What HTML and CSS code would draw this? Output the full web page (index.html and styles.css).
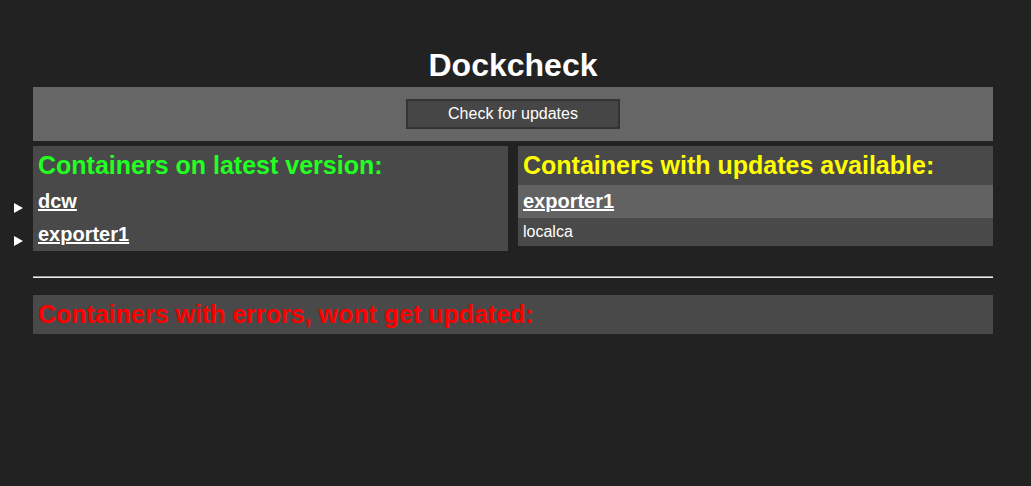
FILE: index.html
```html
<!DOCTYPE html>
<html>
<head>
<meta charset="utf-8">
<title>Dockcheck</title>
<link rel="stylesheet" href="styles.css">
</head>
<body>
<div class="wrap">
  <h1 class="title">Dockcheck</h1>
  <div class="toolbar">
    <button class="check-btn">Check for updates</button>
  </div>
  <div class="columns">
    <section class="panel">
      <h2 class="panel-title ok">Containers on latest version:</h2>
      <ul class="list">
        <li class="item marked"><a class="name" href="#">dcw</a></li>
        <li class="item marked"><a class="name" href="#">exporter1</a></li>
      </ul>
    </section>
    <section class="panel">
      <h2 class="panel-title upd">Containers with updates available:</h2>
      <ul class="list">
        <li class="item active"><a class="name" href="#">exporter1</a></li>
        <li class="item plain">localca</li>
      </ul>
    </section>
  </div>
  <hr class="divider">
  <section class="panel">
    <h2 class="panel-title err">Containers with errors, wont get updated:</h2>
  </section>
</div>
</body>
</html>
```

FILE: styles.css
```css
html, body {
  background: #222222;
}
body {
  margin: 0;
  padding: 0 0 0 33px;
  font-family: "Liberation Sans", Arial, sans-serif;
  color: #ffffff;
}
.wrap {
  width: 960px;
}
.title {
  margin: 47px 0 3px;
  font-size: 32px;
  line-height: 37px;
  font-weight: bold;
  text-align: center;
  color: #ffffff;
}
.toolbar {
  background: #666666;
  padding: 12px 0;
  display: flex;
  justify-content: center;
}
.check-btn {
  width: 214px;
  height: 30px;
  background: #464646;
  border: 2px solid #333333;
  color: #ffffff;
  font-family: "Liberation Sans", Arial, sans-serif;
  font-size: 16px;
  padding: 0;
  margin: 0;
}
.columns {
  margin-top: 5px;
  display: flex;
  gap: 10px;
  align-items: flex-start;
}
.columns .panel {
  flex: 1;
}
.panel {
  background: #494949;
}
.panel-title {
  margin: 0;
  padding: 5px 5px 6px;
  font-size: 25px;
  line-height: 28px;
  font-weight: bold;
}
.ok { color: #22ff22; }
.upd { color: #ffff00; }
.err { color: #ff0000; }
.list {
  list-style: none;
  margin: 0;
  padding: 0;
}
.item {
  padding: 5px;
  position: relative;
}
.name {
  color: #ffffff;
  font-weight: bold;
  font-size: 20px;
  line-height: 23px;
  text-decoration: underline;
}
.item.active {
  background: #626262;
}
.item.plain {
  font-size: 16px;
  line-height: 18px;
}
.item.marked::before {
  content: "";
  position: absolute;
  left: -19px;
  top: 18px;
  width: 0;
  height: 0;
  border-left: 9px solid #ffffff;
  border-top: 5px solid transparent;
  border-bottom: 5px solid transparent;
}
.divider {
  margin: 25px 0 17px;
  height: 0;
  border: none;
  border-top: 1px solid #9a9a9a;
  border-bottom: 1px solid #eeeeee;
}
```
